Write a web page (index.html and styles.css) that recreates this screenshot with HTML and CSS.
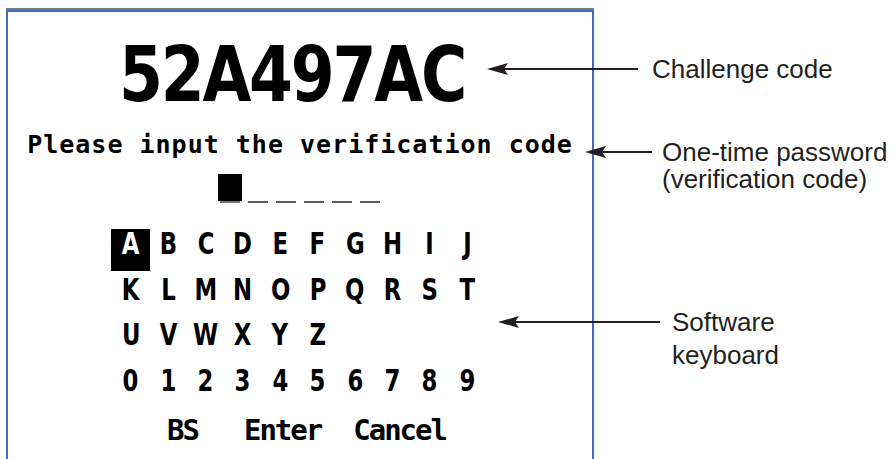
FILE: index.html
```html
<!DOCTYPE html>
<html lang="en">

<head>
    <meta charset="UTF-8">
    <meta name="viewport" content="width=device-width, initial-scale=1.0">
    <title>Challenge code and one-time password</title>

    <link rel="stylesheet" href="styles.css">
</head>

<body>
    <main class="figure">
        <section class="screen">
            <div class="panel">
                <div class="challenge">52A497AC</div>
                <div class="prompt">Please input the verification code</div>

                <div class="otp">
                    <span class="slot active"></span>
                    <span class="slot"></span>
                    <span class="slot"></span>
                    <span class="slot"></span>
                    <span class="slot"></span>
                    <span class="slot"></span>
                </div>

                <div class="keys">
                    <span class="key selected"><b>A</b></span>
                    <span class="key"><b>B</b></span>
                    <span class="key"><b>C</b></span>
                    <span class="key"><b>D</b></span>
                    <span class="key"><b>E</b></span>
                    <span class="key"><b>F</b></span>
                    <span class="key"><b>G</b></span>
                    <span class="key"><b>H</b></span>
                    <span class="key"><b>I</b></span>
                    <span class="key"><b>J</b></span>

                    <span class="key"><b>K</b></span>
                    <span class="key"><b>L</b></span>
                    <span class="key"><b>M</b></span>
                    <span class="key"><b>N</b></span>
                    <span class="key"><b>O</b></span>
                    <span class="key"><b>P</b></span>
                    <span class="key"><b>Q</b></span>
                    <span class="key"><b>R</b></span>
                    <span class="key"><b>S</b></span>
                    <span class="key"><b>T</b></span>

                    <span class="key"><b>U</b></span>
                    <span class="key"><b>V</b></span>
                    <span class="key"><b>W</b></span>
                    <span class="key"><b>X</b></span>
                    <span class="key"><b>Y</b></span>
                    <span class="key"><b>Z</b></span>
                    <span class="key"></span>
                    <span class="key"></span>
                    <span class="key"></span>
                    <span class="key"></span>

                    <span class="key"><b>0</b></span>
                    <span class="key"><b>1</b></span>
                    <span class="key"><b>2</b></span>
                    <span class="key"><b>3</b></span>
                    <span class="key"><b>4</b></span>
                    <span class="key"><b>5</b></span>
                    <span class="key"><b>6</b></span>
                    <span class="key"><b>7</b></span>
                    <span class="key"><b>8</b></span>
                    <span class="key"><b>9</b></span>
                </div>

                <div class="actions">
                    <span class="action">BS</span>
                    <span class="action enter">Enter</span>
                    <span class="action cancel">Cancel</span>
                </div>
            </div>
        </section>

        <!-- callouts -->
        <div class="callout to-challenge">
            <svg class="arrow" width="151" height="12" viewBox="0 0 151 12">
                <polygon points="0,6 21,0 17,6 21,12" />
                <line x1="16" y1="6" x2="151" y2="6" />
            </svg>
            <p class="label">Challenge code</p>
        </div>

        <div class="callout to-otp">
            <svg class="arrow" width="67" height="12" viewBox="0 0 67 12">
                <polygon points="0,6 21,0 17,6 21,12" />
                <line x1="16" y1="6" x2="67" y2="6" />
            </svg>
            <p class="label">One-time password<br>(verification code)</p>
        </div>

        <div class="callout to-keyboard">
            <svg class="arrow" width="162" height="12" viewBox="0 0 162 12">
                <polygon points="0,6 21,0 17,6 21,12" />
                <line x1="16" y1="6" x2="162" y2="6" />
            </svg>
            <p class="label">Software<br>keyboard</p>
        </div>
    </main>
</body>

</html>
```

FILE: styles.css
```css
:root {
    --ink: #231f20;
    --frame: #3a6cc2;
}

html,
body {
    margin: 0;
    background: #fff;
    overflow: hidden;
}

.figure {
    position: relative;
    width: 896px;
    height: 459px;
}

/* device screen */
.screen {
    margin: 8px 0 0 6px;
    width: 588px;
    border-top: 2px solid #7b7b7b;
}

.panel {
    box-sizing: border-box;
    height: 470px;
    padding-top: 24px;
    border: 2px solid var(--frame);
    border-bottom: none;
    display: flex;
    flex-direction: column;
    align-items: center;
    color: #000;
}

.challenge {
    margin-right: 16px;
    font: bold 77px/77px "DejaVu Sans", sans-serif;
    letter-spacing: -2.7px;
    transform: scaleX(0.82);
}

.prompt {
    margin-top: 19px;
    font: bold 25px/25px "DejaVu Sans Mono", monospace;
    letter-spacing: 1px;
    white-space: nowrap;
}

.otp {
    margin-top: 17px;
    display: flex;
    gap: 8.2px;
}

.slot {
    width: 20px;
    height: 27px;
    border-bottom: 2px solid #5c5c5c;
    position: relative;
}

.slot.active::before {
    content: "";
    position: absolute;
    left: -2px;
    top: 0;
    width: 24px;
    height: 27px;
    background: #000;
}

.slot.active {
    border-bottom-color: #777;
}

.keys {
    margin-top: 26px;
    margin-right: 2px;
    display: grid;
    grid-template-columns: repeat(10, 37.4px);
    grid-auto-rows: 42px;
    row-gap: 3.5px;
}

.key {
    display: flex;
    justify-content: center;
    align-items: flex-start;
    font: bold 30px/30px "DejaVu Sans", sans-serif;
}

.key b {
    display: inline-block;
    transform: scaleX(0.76);
}

.key.selected {
    margin: 0 -1px;
    background: #000;
    color: #fff;
}

.actions {
    align-self: stretch;
    margin-top: 8px;
    padding-left: 159px;
    display: flex;
    font: bold 29px/29px "DejaVu Sans Mono", monospace;
    letter-spacing: -2px;
}

.action.enter {
    margin-left: 46px;
}

.action.cancel {
    margin-left: 32px;
}

/* annotations */
.callout {
    position: absolute;
    display: flex;
    align-items: flex-start;
    color: var(--ink);
}

.arrow {
    margin-top: 9px;
    flex: none;
}

.arrow polygon {
    fill: var(--ink);
}

.arrow line {
    stroke: var(--ink);
    stroke-width: 2;
}

.label {
    margin: 0;
    font: 26px/30px "Liberation Sans", Arial, sans-serif;
    white-space: nowrap;
}

.to-challenge {
    left: 487px;
    top: 46px;
}

.to-challenge .label {
    margin-left: 14px;
}

.to-otp {
    left: 585px;
    top: 131px;
}

.to-otp .label {
    margin-left: 10px;
    line-height: 27px;
}

.to-otp .arrow {
    margin-top: 7px;
}

.to-keyboard {
    left: 498px;
    top: 298px;
}

.to-keyboard .label {
    margin-left: 12px;
    line-height: 33px;
}

.to-keyboard .arrow {
    margin-top: 10px;
}
```
